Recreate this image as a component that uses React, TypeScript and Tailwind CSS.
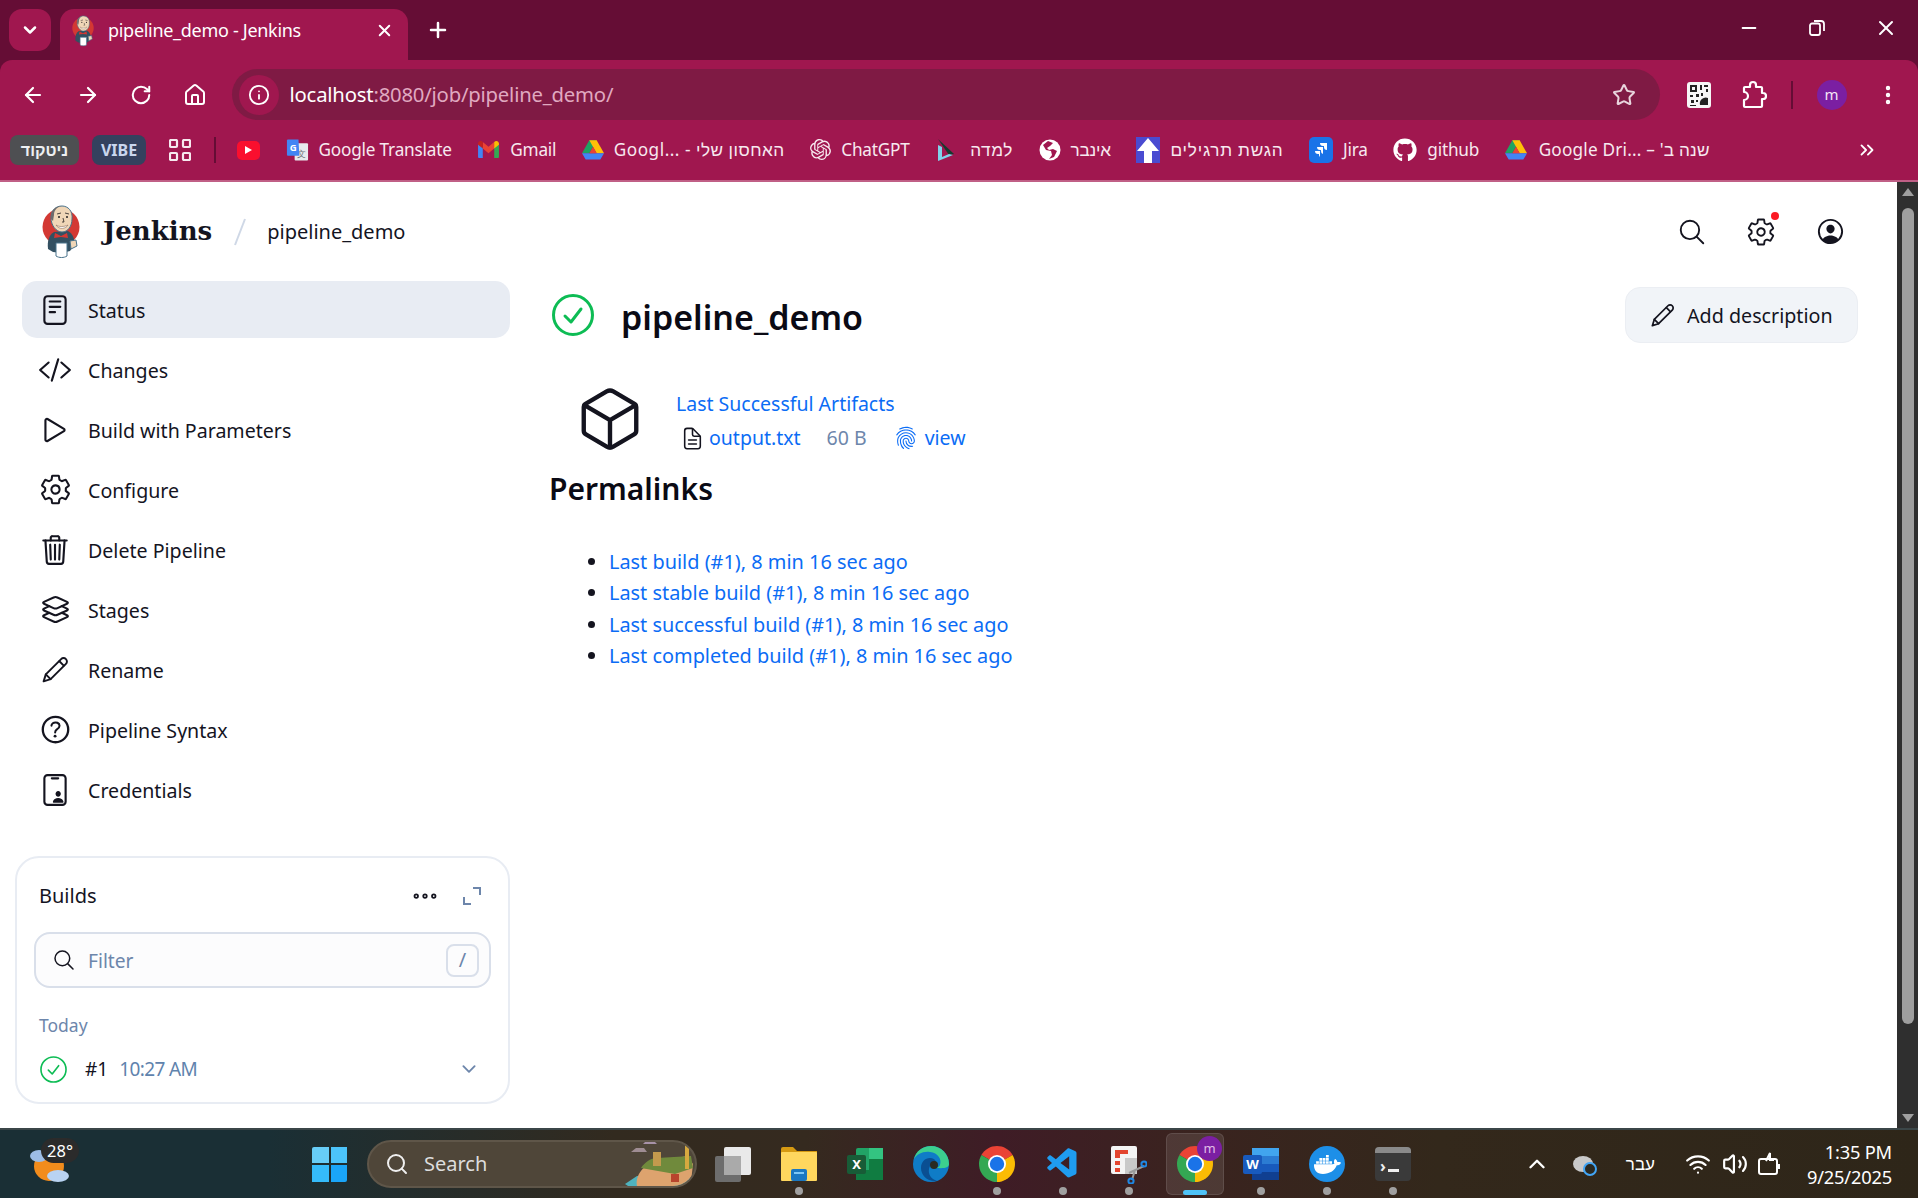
import {
  ArrowLeft,
  ArrowRight,
  RotateCw,
  Home,
  Info,
  Star,
  EllipsisVertical,
  Plus,
  X,
  Minus,
  ChevronDown,
  ChevronUp,
  ChevronsRight,
  Wifi,
  Volume2,
  Search,
} from 'lucide-react';
import {
  IoReaderOutline,
  IoCodeSlashOutline,
  IoPlayOutline,
  IoSettingsOutline,
  IoTrashOutline,
  IoLayersOutline,
  IoHelpCircleOutline,
  IoIdCardOutline,
  IoSearchOutline,
  IoPersonCircleOutline,
  IoCubeOutline,
  IoFingerPrintOutline,
  IoDocumentTextOutline,
  IoEllipsisHorizontalOutline,
  IoChevronDownOutline,
} from 'react-icons/io5';
import { FaGithub, FaDocker } from 'react-icons/fa';
import { SiOpenai } from 'react-icons/si';
import { VscVscode } from 'react-icons/vsc';

const ui = { fontFamily: '"Noto Sans", "Liberation Sans", sans-serif' };

function JenkinsLogo({ className }: { className: string }) {
  return (
    <svg viewBox="0 0 38 54" className={className}>
      <circle cx="19" cy="22" r="18.5" fill="#d33833" />
      <path d="M6 44c-1-8 1-14 6-17l14-1c5 3 7 8 6 14l-4 6-8 2-9-1z" fill="#335061" />
      <path d="M9 13C9 5 14 1 20 1s11 5 10 13c0 7-4 13-10 13S9 20 9 13z" fill="#f0d6b7" stroke="#49728b" strokeWidth="1" />
      <path d="M9 14C8 6 13 1 20 1c-6 1-8 5-8 9l-1 6z" fill="#6d6b6d" />
      <path d="M13 28l6 3 6-3 1 5-7-1-7 1z" fill="#d33833" />
      <path d="M14 20c3 2 8 2 12 0-2 4-9 5-12 0z" fill="#fff" stroke="#8a6a55" strokeWidth=".6" />
      <circle cx="17" cy="12" r="1" fill="#231f20" />
      <circle cx="25" cy="12" r="1" fill="#231f20" />
      <path d="M15 9l4-1M23 8l4 1M21 13l1 4-2 0" stroke="#231f20" strokeWidth=".8" fill="none" />
      <path d="M14 38h11v13c-3 2-8 2-11 0z" fill="#fff" stroke="#49728b" strokeWidth="1" />
      <path d="M28 36l6-1 1 6-6 3z" fill="#f0d6b7" stroke="#49728b" strokeWidth="1" />
    </svg>
  );
}

function PencilIcon({ className }: { className: string }) {
  return (
    <svg viewBox="0 0 32 32" fill="none" stroke="currentColor" strokeWidth="2.2" strokeLinejoin="round" strokeLinecap="round" className={className}>
      <path d="M3 29l2.5-8L23 3.5a3.6 3.6 0 0 1 5.5 5.5L11 26.5z" />
      <path d="M21 6l5 5M5.5 21l5.5 5.5" />
    </svg>
  );
}

function DriveIcon() {
  return (
    <svg viewBox="0 0 24 22" className="w-[22px] h-[21px]">
      <path d="M8 1h8l-8 14H0z" fill="#1ea362" />
      <path d="M8 1h8l8 14h-8z" fill="#ffc107" />
      <path d="M0 15h24l-4 7H4z" fill="#4285f4" />
      <path d="M8 15h8l-4-7z" fill="#ea4335" />
    </svg>
  );
}

function GmailIcon() {
  return (
    <svg viewBox="0 0 24 20" className="w-[23px] h-[19px]">
      <path d="M1 4v14a1 1 0 0 0 1 1h4V8z" fill="#4285f4" />
      <path d="M23 4v14a1 1 0 0 1-1 1h-4V8z" fill="#34a853" />
      <path d="M18 2v7l-6 5-6-5V2l6 5z" fill="#ea4335" />
      <path d="M1 4c0-3 3-4 5-2v7L1 5z" fill="#c5221f" />
      <path d="M23 4c0-3-3-4-5-2v7l5-4z" fill="#fbbc04" />
    </svg>
  );
}

function TranslateIcon() {
  return (
    <svg viewBox="0 0 24 24" className="w-[23px] h-[24px]">
      <rect x="9" y="5" width="14" height="18" rx="1" fill="#e8eaed" />
      <text x="16" y="19" fontSize="9" fill="#70757a" textAnchor="middle">文</text>
      <path d="M2 1h11l1 17H2a1 1 0 0 1-1-1V2a1 1 0 0 1 1-1z" fill="#4285f4" />
      <text x="7.5" y="13" fontSize="10" fontWeight="700" fill="#fff" textAnchor="middle">G</text>
    </svg>
  );
}

function ChromeIcon({ className }: { className: string }) {
  return (
    <svg viewBox="4 4 40 40" className={className}>
      <path d="M24 24 41.32 14A20 20 0 0 0 6.68 14Z" fill="#ea4335" />
      <path d="M24 24V44A20 20 0 0 0 41.32 14Z" fill="#fbbc04" />
      <path d="M24 24 6.68 14A20 20 0 0 0 24 44Z" fill="#34a853" />
      <circle cx="24" cy="24" r="10" fill="#fff" />
      <circle cx="24" cy="24" r="8" fill="#1a73e8" />
    </svg>
  );
}

function EdgeIcon() {
  return (
    <svg viewBox="0 0 36 36" className="w-[36px] h-[36px]">
      <circle cx="18" cy="18" r="18" fill="#0f7cc7" />
      <path d="M36 18C36 8 28 0 18 0 10 0 3 5 1 13c3-5 9-8 16-7 8 1 12 7 10 13-1 3-5 3-9 2 5 1 18 3 18-3z" fill="#3ccf8e" />
      <path d="M17 12c-5 0-9 4-9 10 0 7 6 14 16 13-6-2-9-7-8-12 1-4 3-6 7-7-1-3-3-4-6-4z" fill="#0a4f92" />
      <circle cx="21" cy="19" r="4" fill="#2a2a22" />
    </svg>
  );
}

function ExcelIcon() {
  return (
    <svg viewBox="0 0 36 36" className="w-[36px] h-[36px]">
      <rect x="9" y="2" width="27" height="32" rx="2" fill="#21a366" />
      <rect x="22" y="2" width="14" height="11" fill="#33c481" />
      <rect x="9" y="24" width="27" height="10" fill="#107c41" />
      <rect x="22" y="13" width="14" height="11" fill="#107c41" />
      <rect x="0" y="9" width="19" height="19" rx="2" fill="#185c37" />
      <text x="9.5" y="23" fontSize="13" fontWeight="700" fill="#fff" textAnchor="middle">X</text>
    </svg>
  );
}

function WordIcon() {
  return (
    <svg viewBox="0 0 36 36" className="w-[36px] h-[36px]">
      <rect x="9" y="2" width="27" height="32" rx="2" fill="#2b7cd3" />
      <rect x="9" y="2" width="27" height="8" fill="#41a5ee" />
      <rect x="9" y="18" width="27" height="8" fill="#185abd" />
      <rect x="9" y="26" width="27" height="8" fill="#103f91" />
      <rect x="0" y="9" width="19" height="19" rx="2" fill="#185abd" />
      <text x="9.5" y="23" fontSize="13" fontWeight="700" fill="#fff" textAnchor="middle">W</text>
    </svg>
  );
}

function SnipIcon() {
  return (
    <svg viewBox="0 0 36 40" className="w-[36px] h-[40px]">
      <rect x="0" y="2" width="26" height="28" rx="2" fill="#f4f4f4" />
      <path d="M4 6h13v4h-8v4h-5z M4 17h5v4h-5z M4 24h5v4h-5z" fill="#e3452f" />
      <rect x="14" y="14" width="12" height="16" fill="#c9c9c9" />
      <path d="M18 29 33 22M24 26 21 36" stroke="#9a9a9a" strokeWidth="2" />
      <circle cx="33" cy="20" r="2.6" fill="none" stroke="#1e88e5" strokeWidth="2" />
      <circle cx="20" cy="37" r="2.6" fill="none" stroke="#1e88e5" strokeWidth="2" />
    </svg>
  );
}

function FolderIcon() {
  return (
    <svg viewBox="0 0 36 36" className="w-[36px] h-[36px]">
      <path d="M0 3a2 2 0 0 1 2-2h10l4 4h20v8H0z" fill="#d69a12" />
      <rect x="0" y="6" width="36" height="29" rx="1" fill="#ffd75e" />
      <rect x="10" y="23" width="16" height="12" rx="2" fill="#1a78c2" />
      <rect x="13" y="26" width="10" height="2" fill="#7cc7f5" />
    </svg>
  );
}

function TaskViewIcon() {
  return (
    <svg viewBox="0 0 36 36" className="w-[36px] h-[36px]">
      <rect x="0" y="10" width="26" height="26" rx="2" fill="#6d6d6d" />
      <rect x="9" y="1" width="27" height="28" rx="2" fill="#e9e9e9" />
      <rect x="9" y="10" width="17" height="19" fill="#aaaaaa" />
    </svg>
  );
}

function StartLogo() {
  return (
    <div className="grid grid-cols-2 gap-[2px] w-[35px] h-[35px]">
      <div className="bg-[#67cdf7] rounded-tl-[2px]" />
      <div className="bg-[#4cc4fb]" />
      <div className="bg-[#35bbfa]" />
      <div className="bg-[#1aa5f8] rounded-br-[2px]" />
    </div>
  );
}

function SearchArt() {
  return (
    <svg viewBox="0 0 72 48" className="w-[72px] h-[48px]">
      <path d="M8 12h16l-3-4h-8z" fill="#9f8d93" />
      <path d="M20 4h14l-3-3h-8z" fill="#a792a8" />
      <path d="M2 44l12-8 50-4 6 12-10 4H8z" fill="#4fb3bf" />
      <path d="M14 46c-2-10 6-22 20-24l30-6 6 8-2 18-12 4z" fill="#dda36e" />
      <path d="M18 28c4-6 10-10 16-10l34-2 2 12-18 6z" fill="#708a3c" />
      <rect x="30" y="12" width="8" height="14" fill="#c49a4d" />
      <rect x="62" y="5" width="4" height="24" fill="#d7a93f" />
      <rect x="48" y="34" width="8" height="8" fill="#b8452d" />
    </svg>
  );
}

function SuccessIcon({ className, stroke = 2 }: { className: string; stroke?: number }) {
  return (
    <svg viewBox="0 0 42 42" fill="none" className={className}>
      <circle cx="21" cy="21" r="19.5" stroke="#0dbc54" strokeWidth={stroke + 1} />
      <path d="M13 22l6 6 10-13" stroke="#0dbc54" strokeWidth={stroke + 1} strokeLinecap="round" strokeLinejoin="round" />
    </svg>
  );
}

const taskItems = [
  { el: <TaskViewIcon />, dot: false },
  { el: <FolderIcon />, dot: true },
  { el: <ExcelIcon />, dot: false },
  { el: <EdgeIcon />, dot: false },
  { el: <ChromeIcon className="w-[36px] h-[36px]" />, dot: true },
  { el: <VscVscode className="w-[36px] h-[36px] text-[#1f9cf0]" />, dot: true },
  { el: <SnipIcon />, dot: true },
];

const sideItems = [
  { label: 'Changes', icon: <IoCodeSlashOutline className="w-[34px] h-[34px]" /> },
  { label: 'Build with Parameters', icon: <IoPlayOutline className="w-[34px] h-[34px]" /> },
  { label: 'Configure', icon: <IoSettingsOutline className="w-[33px] h-[33px]" /> },
  { label: 'Delete Pipeline', icon: <IoTrashOutline className="w-[34px] h-[34px]" /> },
  { label: 'Stages', icon: <IoLayersOutline className="w-[33px] h-[33px]" /> },
  { label: 'Rename', icon: <PencilIcon className="w-[28px] h-[28px]" /> },
  { label: 'Pipeline Syntax', icon: <IoHelpCircleOutline className="w-[37px] h-[37px]" /> },
  { label: 'Credentials', icon: <IoIdCardOutline className="w-[34px] h-[34px]" /> },
];

const permalinks = [
  'Last build (#1), 8 min 16 sec ago',
  'Last stable build (#1), 8 min 16 sec ago',
  'Last successful build (#1), 8 min 16 sec ago',
  'Last completed build (#1), 8 min 16 sec ago',
];

function Bookmark({ icon, label, spread = 'tracking-[-0.2px]' }: { icon: React.ReactNode; label: string; spread?: string }) {
  return (
    <div className="flex items-center gap-[10px] shrink-0">
      {icon}
      <span className={`text-[#f7e9ef] text-[17.2px] whitespace-nowrap ${spread}`}>{label}</span>
    </div>
  );
}

export default function App() {
  return (
    <div className="w-[1918px] h-[1198px] flex flex-col overflow-hidden" style={ui}>
      {/* browser chrome */}
      <div className="h-[182px] bg-[#650d35] shrink-0 flex flex-col">
        <div className="h-[60px] flex items-start pt-[9px] pl-[9px]">
          <div className="w-[42px] h-[42px] bg-[#a0174f] rounded-[13px] flex items-center justify-center text-white">
            <ChevronDown size={20} strokeWidth={3} />
          </div>
          <div className="relative ml-[9px] w-[348px] h-[51px] bg-[#a0174f] rounded-t-[14px] flex items-start pt-[8px] pl-[12px] pr-[14px] gap-[14px]">
            <JenkinsLogo className="w-[22px] h-[32px] shrink-0 -mt-[2px]" />
            <span className="text-white text-[18px] tracking-[-0.3px] flex-1 whitespace-nowrap">pipeline_demo - Jenkins</span>
            <X size={19} strokeWidth={2.5} className="text-white mt-[4px]" />
          </div>
          <Plus size={24} strokeWidth={2.5} className="text-white ml-[18px] mt-[9px]" />
          <div className="flex-1" />
          <div className="flex items-center h-[40px] -mt-[1px] pr-[20px] text-white gap-[47px]">
            <Minus size={22} strokeWidth={2} />
            <svg viewBox="0 0 20 20" fill="none" stroke="currentColor" strokeWidth="1.8" className="w-[20px] h-[20px]">
              <rect x="3" y="5.5" width="10" height="11.5" rx="2" />
              <path d="M7 3h7a3 3 0 0 1 3 3v7" />
            </svg>
            <X size={24} strokeWidth={2} />
          </div>
        </div>
        <div className="h-[60px] bg-[#a0174f] rounded-t-[12px] flex items-end pl-[21px] pr-[20px] text-white">
          <div className="h-[51px] flex items-center gap-[30.5px] shrink-0">
            <ArrowLeft size={24} strokeWidth={2.2} />
            <ArrowRight size={24} strokeWidth={2.2} />
            <RotateCw size={22} strokeWidth={2.2} />
            <Home size={24} strokeWidth={2} />
          </div>
          <div className="ml-[25px] w-[1428px] shrink-0 h-[51px] bg-[#7f1a44] rounded-full flex items-center pl-[7px] pr-[24px]">
            <div className="w-[40px] h-[40px] rounded-full bg-[#a0174f] flex items-center justify-center">
              <Info size={22} strokeWidth={2} />
            </div>
            <span className="ml-[11px] text-[20.3px] tracking-[-0.2px]">
              localhost<span className="text-[#e0a9c0]">:8080/job/pipeline_demo/</span>
            </span>
            <div className="flex-1" />
            <Star size={24} strokeWidth={2} className="text-[#e8d5dd]" />
          </div>
          <div className="h-[51px] flex items-center flex-1 pl-[27px]">
            <svg viewBox="0 0 24 26" className="w-[24px] h-[26px] shrink-0">
              <rect width="24" height="26" rx="3" fill="#f6f6f6" />
              <path
                d="M3 3h7v7H3zM5 5v3h3V5zM13 3h2v5h-2zM17 3h4v2h-4zM19 7h2v3h-2zM3 13h3v2H3zM9 12h3v3H9zM14 11h2v3h-2zM4 18h3v3H4zM9 18h2v2H9zM3 23h6v1H3z"
                fill="#222"
                fillRule="evenodd"
              />
              <path d="M13 23a6 6 0 0 1 8-7v7z" fill="#222" />
            </svg>
            <svg viewBox="0 0 26 30" fill="none" stroke="currentColor" strokeWidth="2.2" strokeLinejoin="round" className="ml-[30px] w-[26px] h-[30px] shrink-0">
              <path d="M4 7h5V5a3 3 0 0 1 6 0v2h5a1 1 0 0 1 1 1v5h1a3 3 0 0 1 0 6h-1v7a1 1 0 0 1-1 1H4a1 1 0 0 1-1-1v-6a4 4 0 0 0 0-8V8a1 1 0 0 1 1-1z" />
            </svg>
            <div className="w-[2px] h-[28px] bg-[#650d35] ml-[24px] shrink-0" />
            <div className="ml-[24px] w-[30px] h-[30px] rounded-full bg-[#7b1fa2] flex items-center justify-center text-[15px] text-[#f3e5f5] shrink-0">
              m
            </div>
            <EllipsisVertical size={24} strokeWidth={2.4} className="ml-[29px] shrink-0" />
          </div>
        </div>
        <div className="h-[62px] bg-[#a0174f] border-b-2 border-[#c05f86] flex items-center pl-[10px] gap-[25.5px] relative">
          <div className="flex items-center gap-[13px] shrink-0">
            <div className="h-[30px] w-[69px] rounded-[8px] bg-[#4e4f52] text-[#eef0f2] text-[16px] font-bold flex items-center justify-center">ניטקוד</div>
            <div className="h-[30px] w-[54px] rounded-[8px] bg-[#34415e] text-[#c9d6ee] text-[16px] font-bold flex items-center justify-center">VIBE</div>
            <svg viewBox="0 0 22 22" fill="none" stroke="#f7e9ef" strokeWidth="2.2" className="ml-[10px] w-[22px] h-[22px]">
              <rect x="1" y="1" width="7" height="7" rx="1" />
              <rect x="14" y="1" width="7" height="7" rx="1" />
              <rect x="1" y="14" width="7" height="7" rx="1" />
              <rect x="14" y="14" width="7" height="7" rx="1" />
            </svg>
            <div className="ml-[10px] w-[2px] h-[26px] bg-[#650d35]" />
            <div className="ml-[8px] w-[23px] h-[19px] bg-[#fa0f2e] rounded-[5px] flex items-center justify-center">
              <div className="border-l-[7px] border-l-white border-y-[4px] border-y-transparent" />
            </div>
          </div>
          <Bookmark icon={<TranslateIcon />} label="Google Translate" />
          <Bookmark icon={<GmailIcon />} label="Gmail" />
          <Bookmark icon={<DriveIcon />} label="Googl... - האחסון שלי" spread="tracking-[0.5px]" />
          <Bookmark icon={<SiOpenai className="w-[21px] h-[21px] text-[#f7e9ef]" />} label="ChatGPT" />
          <Bookmark
            icon={
              <svg viewBox="0 0 20 24" className="w-[22px] h-[24px]">
                <path d="M2 1l16 15-5 1z" fill="#153a2e" />
                <path d="M2 7v16l15-6-4-1-7 3V9z" fill="#7fd3ea" />
              </svg>
            }
            label="למדה"
            spread="pl-[3px] tracking-[0.6px]"
          />
          <Bookmark
            icon={
              <svg viewBox="0 0 22 22" className="w-[22px] h-[22px]">
                <circle cx="11" cy="11" r="10.5" fill="#fff" />
                <path d="M9 2l-5 4 3 5 5 1 1 4-3 4 5-2 3-6-4-2-4 1-2-2 3-2 3-3z" fill="#a0174f" />
              </svg>
            }
            label="אינבר"
          />
          <Bookmark
            icon={
              <svg viewBox="0 0 24 26" className="w-[24px] h-[26px]">
                <rect width="24" height="26" fill="#4a4bd1" />
                <path d="M12 1l11 13h-7v12H8V14H1z" fill="#fff" />
              </svg>
            }
            label="הגשת תרגילים"
            spread="tracking-[0.8px]"
          />
          <Bookmark
            icon={
              <svg viewBox="0 0 24 26" className="w-[24px] h-[26px]">
                <rect width="24" height="26" rx="5" fill="#1a73e8" />
                <path d="M18 6h-7a3 3 0 0 0 3 3h1v1a3 3 0 0 0 3 3zM14 10H8a3 3 0 0 0 3 3h1v1a3 3 0 0 0 2 3zM11 14H6a3 3 0 0 0 3 3h1v1a3 3 0 0 0 1 2z" fill="#fff" />
              </svg>
            }
            label="Jira"
          />
          <Bookmark icon={<FaGithub className="w-[24px] h-[24px] text-white" />} label="github" />
          <Bookmark icon={<DriveIcon />} label={"Google Dri... – שנה ב'\u200f"} spread="pl-[2px] tracking-[0.2px]" />
          <div className="flex-1" />
          <ChevronsRight size={22} strokeWidth={2} className="text-white mr-[40px]" />
        </div>
      </div>

      {/* page + scrollbar */}
      <div className="flex flex-1 min-h-0">
        <div className="flex-1 min-w-0 bg-white flex flex-col text-[#14141f]">
          <header className="h-[99px] shrink-0 flex items-center pl-[42px] pr-[51px]">
            <JenkinsLogo className="w-[38px] h-[54px] shrink-0" />
            <span className="ml-[23px] text-[26px] font-bold" style={{ fontFamily: '"DejaVu Serif", serif' }}>
              Jenkins
            </span>
            <svg viewBox="0 0 12 28" className="ml-[22px] w-[12px] h-[28px]">
              <path d="M11 1 1 27" stroke="#cfd8e6" strokeWidth="2" />
            </svg>
            <span className="ml-[21px] text-[20px]">pipeline_demo</span>
            <div className="flex-1" />
            <div className="flex items-center gap-[39px]">
              <IoSearchOutline className="w-[30px] h-[30px]" />
              <div className="relative">
                <IoSettingsOutline className="w-[30px] h-[30px]" />
                <div className="absolute -top-[5px] right-[-3px] w-[8px] h-[8px] rounded-full bg-[#fb1a24]" />
              </div>
              <IoPersonCircleOutline className="w-[31px] h-[31px]" />
            </div>
          </header>

          <div className="flex flex-1 min-h-0">
            <aside className="w-[510px] shrink-0 flex flex-col">
              <nav className="pl-[22px] flex flex-col gap-[3px]">
                <div className="h-[57px] bg-[#e8ecf3] rounded-[15px] flex items-center">
                  <div className="w-[66px] flex justify-center">
                    <IoReaderOutline className="w-[34px] h-[34px]" />
                  </div>
                  <span className="pt-[2px] text-[19.6px]">Status</span>
                </div>
                {sideItems.map((item) => (
                  <div key={item.label} className="h-[57px] flex items-center">
                    <div className="w-[66px] flex justify-center">{item.icon}</div>
                    <span className="pt-[2px] text-[19.6px]">{item.label}</span>
                  </div>
                ))}
              </nav>
              <div className="ml-[15px] mt-[38px] h-[248px] rounded-[24px] border-2 border-[#e8ecf3] px-[17px] pt-[18px]">
                <div className="flex items-center h-[40px] pl-[5px] pr-[10px]">
                  <span className="text-[20px]">Builds</span>
                  <div className="flex-1" />
                  <IoEllipsisHorizontalOutline className="w-[28px] h-[28px]" />
                  <svg viewBox="0 0 18 18" fill="none" stroke="#6d86ab" strokeWidth="2" className="ml-[24px] w-[18px] h-[18px]">
                    <path d="M1 10v7h7M10 1h7v7" />
                  </svg>
                </div>
                <div className="mt-[16px] h-[56px] rounded-[16px] border-2 border-[#d9dfea] bg-[#fcfcfd] flex items-center pl-[16px] pr-[10px]">
                  <IoSearchOutline className="w-[24px] h-[24px]" />
                  <span className="ml-[12px] pt-[3px] text-[19.2px] text-[#6d86ab]">Filter</span>
                  <div className="flex-1" />
                  <div className="w-[33px] h-[33px] rounded-[8px] border-2 border-[#d9dfea] flex items-center justify-center text-[20px] text-[#6d86ab]">
                    /
                  </div>
                </div>
                <div className="mt-[24px] pl-[5px] text-[17.5px] text-[#6d86ab]">Today</div>
                <div className="mt-[13px] flex items-center h-[36px] pl-[6px] pr-[12px]">
                  <SuccessIcon className="w-[27px] h-[27px]" stroke={1.5} />
                  <span className="ml-[18px] text-[19px]">#1</span>
                  <span className="ml-[11px] text-[19px] text-[#6083ad] tracking-[-0.6px]">10:27 AM</span>
                  <div className="flex-1" />
                  <IoChevronDownOutline className="w-[20px] h-[20px] text-[#6d86ab]" />
                </div>
              </div>
            </aside>

            <main className="flex-1 min-w-0 pl-[39px] pr-[39px] pt-[6px]">
              <div className="flex items-center h-[56px]">
                <SuccessIcon className="ml-[3px] w-[42px] h-[42px]" />
                <h1 className="ml-[27px] pt-[4px] text-[34px] font-semibold text-[#0a0a14]">pipeline_demo</h1>
                <div className="flex-1" />
                <div className="h-[56px] w-[233px] rounded-[15px] bg-[#f1f4f8] border border-[#ebeef3] flex items-center pl-[24px]">
                  <PencilIcon className="w-[25px] h-[25px]" />
                  <span className="ml-[12px] pt-[1px] text-[19.7px]">Add description</span>
                </div>
              </div>
              <div className="mt-[41px] flex items-center h-[70px]">
                <IoCubeOutline className="ml-[26px] w-[70px] h-[70px] shrink-0" />
                <div className="ml-[31px] pt-[3px] flex flex-col">
                  <span className="text-[19.5px] leading-[35px] text-[#0b6cf5]">Last Successful Artifacts</span>
                  <div className="flex items-center h-[35px] text-[19.5px]">
                    <IoDocumentTextOutline className="ml-[4px] w-[25px] h-[27px]" />
                    <span className="ml-[4px] text-[#0b6cf5]">output.txt</span>
                    <span className="ml-[26px] text-[#6d86ab]">60 B</span>
                    <IoFingerPrintOutline className="ml-[27px] w-[24px] h-[24px] text-[#0b6cf5]" />
                    <span className="ml-[7px] text-[#0b6cf5]">view</span>
                  </div>
                </div>
              </div>
              <h2 className="mt-[13px] text-[30px] font-semibold leading-[44px] text-[#0a0a14]">Permalinks</h2>
              <ul className="mt-[35px] list-disc pl-[60px] text-[19.9px] leading-[31.4px] text-[#0b6cf5] marker:text-[#14141f]">
                {permalinks.map((link) => (
                  <li key={link}>{link}</li>
                ))}
              </ul>
            </main>
          </div>
        </div>
        <div className="w-[21px] shrink-0 bg-[#2f2f2f] flex flex-col items-center">
          <div className="mt-[6px] border-x-[6px] border-x-transparent border-b-[8px] border-b-[#9f9f9f]" />
          <div className="mt-[12px] w-[12px] h-[816px] rounded-full bg-[#9f9f9f]" />
          <div className="flex-1" />
          <div className="mb-[6px] border-x-[6px] border-x-transparent border-t-[8px] border-t-[#9f9f9f]" />
        </div>
      </div>

      {/* taskbar */}
      <div className="h-[70px] shrink-0 flex items-center text-white border-t-2 border-[#3b4648] bg-[linear-gradient(90deg,#1a2f35_0%,#1a2f35_14%,#322a1f_32%,#352a1f_42%,#3f1c26_52%,#3a231f_62%,#33281b_75%,#2e2619_100%)]">
        <div className="w-[312px] shrink-0 pl-[30px]">
          <div className="relative w-[40px] h-[40px]">
            <svg viewBox="0 0 40 40" className="w-[40px] h-[40px]">
              <circle cx="19" cy="22" r="15" fill="#f28c1c" />
              <ellipse cx="9" cy="12" rx="9" ry="6" fill="#9dbde6" />
              <ellipse cx="28" cy="32" rx="11" ry="6" fill="#b9d3f2" />
            </svg>
            <div className="absolute -top-[6px] left-[11px] h-[25px] px-[6px] rounded-full bg-[#2b2b2b] text-[16.5px] leading-[25px]">28°</div>
          </div>
        </div>
        <StartLogo />
        <div className="ml-[20px] w-[330px] h-[48px] rounded-full bg-[#4f4639] border-2 border-[#5f5649] flex items-center pl-[16px] overflow-hidden">
          <Search size={24} strokeWidth={2} className="text-[#efefef]" />
          <span className="ml-[15px] text-[20px] text-[#ddd]">Search</span>
          <div className="flex-1" />
          <SearchArt />
        </div>
        <div className="ml-[3px] flex">
          {taskItems.map((t, i) => (
            <div key={i} className="relative w-[66px] h-[68px] flex items-center justify-center">
              {t.el}
              {t.dot && <div className="absolute bottom-[3px] w-[8px] h-[8px] rounded-full bg-[#a0a0a0]" />}
            </div>
          ))}
          <div className="relative w-[66px] h-[68px] flex items-center justify-center">
            <div className="absolute inset-x-[4px] inset-y-[3px] rounded-[6px] bg-white/10 border border-white/10" />
            <ChromeIcon className="relative w-[36px] h-[36px]" />
            <div className="absolute top-[6px] right-[6px] w-[25px] h-[25px] rounded-full bg-[#7b1fa2] flex items-center justify-center text-[13px] text-[#e1bee7]">m</div>
            <div className="absolute bottom-[3px] w-[24px] h-[5px] rounded-full bg-[#4fc3f7]" />
          </div>
          {[
            <WordIcon key="w" />,
            <div key="d" className="w-[36px] h-[36px] rounded-full bg-[#1d8fe8] flex items-center justify-center">
              <FaDocker className="w-[27px] h-[27px] text-white" />
            </div>,
            <div key="t" className="w-[36px] h-[34px] rounded-[4px] bg-[#3a3a3a] overflow-hidden flex flex-col">
              <div className="h-[6px] bg-[#8a8a8a]" />
              <div className="flex items-center pl-[5px] gap-[2px] text-[#eee] text-[16px] font-bold leading-none pt-[5px]">
                <span>›</span>
                <span className="mt-[9px] w-[11px] h-[3px] bg-[#eee]" />
              </div>
            </div>,
          ].map((el, i) => (
            <div key={i} className="relative w-[66px] h-[68px] flex items-center justify-center">
              {el}
              <div className="absolute bottom-[3px] w-[8px] h-[8px] rounded-full bg-[#a0a0a0]" />
            </div>
          ))}
        </div>
        <div className="flex-1" />
        <ChevronUp size={26} strokeWidth={2.2} />
        <svg viewBox="0 0 26 24" className="ml-[22px] w-[26px] h-[24px]">
          <ellipse cx="11" cy="12" rx="10" ry="8" fill="#c9c9c9" />
          <circle cx="18" cy="17" r="6" fill="#2b2a22" stroke="#42a5f5" strokeWidth="2" />
        </svg>
        <span className="ml-[28px] text-[17px]">עבר</span>
        <Wifi size={26} strokeWidth={2} className="ml-[30px]" />
        <Volume2 size={26} strokeWidth={2} className="ml-[11px]" />
        <svg viewBox="0 0 24 26" fill="none" stroke="currentColor" strokeWidth="2" className="ml-[9px] w-[24px] h-[26px]">
          <rect x="2" y="8" width="18" height="15" rx="2" />
          <path d="M22 13v5M9 10l4-8v7h4" />
        </svg>
        <div className="ml-[26px] mr-[26px] flex flex-col items-end text-[18.3px] leading-[25px] tracking-[-0.2px]">
          <span>1:35 PM</span>
          <span>9/25/2025</span>
        </div>
      </div>
    </div>
  );
}
